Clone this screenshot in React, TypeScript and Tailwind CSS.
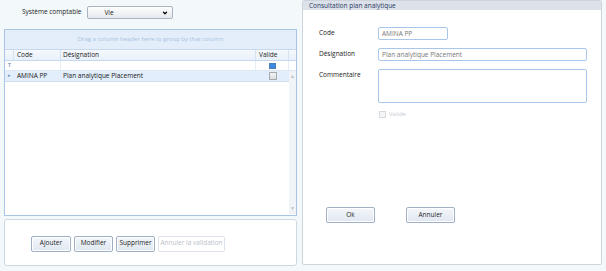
import { ChevronDown } from 'lucide-react'

const font = { fontFamily: '"Open Sans", "Noto Sans", sans-serif' }

function Btn({ label, w, disabled }: { label: string; w: string; disabled?: boolean }) {
  return (
    <button
      disabled={disabled}
      className={[
        'h-[16px] rounded-[2px] border text-[6.5px] leading-none whitespace-nowrap',
        w,
        disabled
          ? 'border-[#dde3ea] bg-white text-[#b9c0c8]'
          : 'border-[#9fb0c4] bg-gradient-to-b from-[#f4f7fb] to-[#dfe7f0] text-[#1e1e1e] shadow-[inset_0_0_0_1px_#ffffff]',
      ].join(' ')}
    >
      {label}
    </button>
  )
}

export default function App() {
  return (
    <div style={font} className="w-[606px] h-[271px] bg-[#f3f8fb] flex text-[#1a1a1a]">
      {/* Left side */}
      <div className="w-[302px] shrink-0 flex flex-col pl-[4px] pr-[5px]">
        <div className="h-[29px] flex items-start pt-[6px]">
          <span className="ml-[18px] mt-[1px] text-[6.5px]">Système comptable</span>
          <div className="ml-[6px] w-[86px] h-[13px] rounded-[2px] border border-[#a9b4c0] bg-gradient-to-b from-[#fdfdfd] to-[#e6e9ed] flex items-center pl-[16px] pr-[4px]">
            <span className="text-[6.5px] flex-1">Vie</span>
            <ChevronDown size={6} strokeWidth={5} className="text-black" />
          </div>
        </div>

        {/* Grid */}
        <div className="h-[187px] border border-[#a9c4e6] bg-white flex flex-col">
          <div className="h-[20px] bg-[#e3eefa] border-b border-[#c5d8ee] flex items-center justify-center text-[6px] text-[#a8c2e0]">
            Drag a column header here to group by that column
          </div>
          <div className="h-[11px] flex bg-gradient-to-b from-[#f6f9fd] to-[#e8f0fa] border-b border-[#c5d8ee] text-[6.5px]">
            <div className="w-[9px] border-r border-[#d6e2ef]" />
            <div className="w-[47px] border-r border-[#d6e2ef] pl-[3px] flex items-center">Code</div>
            <div className="w-[195px] border-r border-[#d6e2ef] pl-[2px] flex items-center">Désignation</div>
            <div className="w-[33px] border-r border-[#d6e2ef] pl-[3px] flex items-center">Valide</div>
            <div className="flex-1" />
          </div>
          <div className="h-[10px] flex border-b border-[#dfe8f2]">
            <div className="w-[9px] flex items-center justify-center text-[5px] font-bold text-[#7a9cc6]">T</div>
            <div className="w-[47px] border-r border-[#e4ecf4]" />
            <div className="w-[195px] border-r border-[#e4ecf4]" />
            <div className="w-[33px] border-r border-[#e4ecf4] flex items-center justify-center">
              <div className="w-[7px] h-[6px] border border-[#4d7fb8] bg-[#3d8be0]" />
            </div>
          </div>
          <div className="flex-1 flex">
            <div className="w-[284px] flex flex-col">
              <div className="h-[11px] flex bg-[#e2eefb] border-b border-[#cfdff0] text-[6.5px]">
                <div className="w-[9px] flex items-center justify-center text-[5px] text-[#6f8fb8]">▸</div>
                <div className="w-[47px] pl-[3px] flex items-center">AMINA PP</div>
                <div className="w-[195px] pl-[2px] flex items-center">Plan analytique Placement</div>
                <div className="w-[33px] flex items-center justify-center">
                  <div className="w-[8px] h-[8px] border border-[#a5aab0] bg-gradient-to-b from-[#f3f3f3] to-[#dcdcdc]" />
                </div>
              </div>
            </div>
            <div className="w-[9px] mb-[1px] bg-[#f1f4f7] flex flex-col items-center justify-between py-[2px] text-[5px] text-[#b9c0c8]">
              <span>▲</span>
              <span>▼</span>
            </div>
          </div>
        </div>

        {/* Buttons panel */}
        <div className="mt-[3px] h-[47px] border border-[#cfd8e2] rounded-[3px] bg-white flex items-center gap-[3px] pl-[26px] pt-[2px]">
          <Btn label="Ajouter" w="w-[40px]" />
          <Btn label="Modifier" w="w-[39px]" />
          <Btn label="Supprimer" w="w-[39px]" />
          <Btn label="Annuler la validation" w="w-[67px]" disabled />
        </div>
      </div>

      {/* Right panel */}
      <div className="w-[300px] shrink-0 h-[265px] border border-[#cdd4dc] rounded-[2px] bg-white flex flex-col">
        <div className="h-[9px] bg-[#dde2ea] flex items-center pl-[6px] text-[6.5px] text-[#1f3a5f]">
          Consultation plan analytique
        </div>
        <div className="flex flex-col pl-[16px] pt-[17px] text-[6.5px]">
          <div className="flex items-start h-[21px]">
            <span className="w-[59px] pt-[1px]">Code</span>
            <div className="w-[70px] h-[13px] border border-[#a9c7ea] rounded-[2px] pl-[3px] flex items-center text-[#777]">AMINA PP</div>
          </div>
          <div className="flex items-start h-[21px]">
            <span className="w-[59px] pt-[1px]">Désignation</span>
            <div className="w-[209px] h-[13px] border border-[#a9c7ea] rounded-[2px] pl-[3px] flex items-center text-[#777]">Plan analytique Placement</div>
          </div>
          <div className="flex items-start">
            <span className="w-[59px] pt-[1px]">Commentaire</span>
            <div className="w-[209px] h-[34px] border border-[#a9c7ea] rounded-[2px]" />
          </div>
          <div className="flex items-center ml-[60px] mt-[7px] gap-[3px] text-[#c5cbd2] text-[6px]">
            <div className="w-[7px] h-[7px] border border-[#d6dbe0] bg-[#f5f6f7]" />
            Valide
          </div>
        </div>
        <div className="mt-[88px] flex gap-[31px] pl-[23px]">
          <Btn label="Ok" w="w-[49px]" />
          <Btn label="Annuler" w="w-[49px]" />
        </div>
      </div>
    </div>
  )
}
